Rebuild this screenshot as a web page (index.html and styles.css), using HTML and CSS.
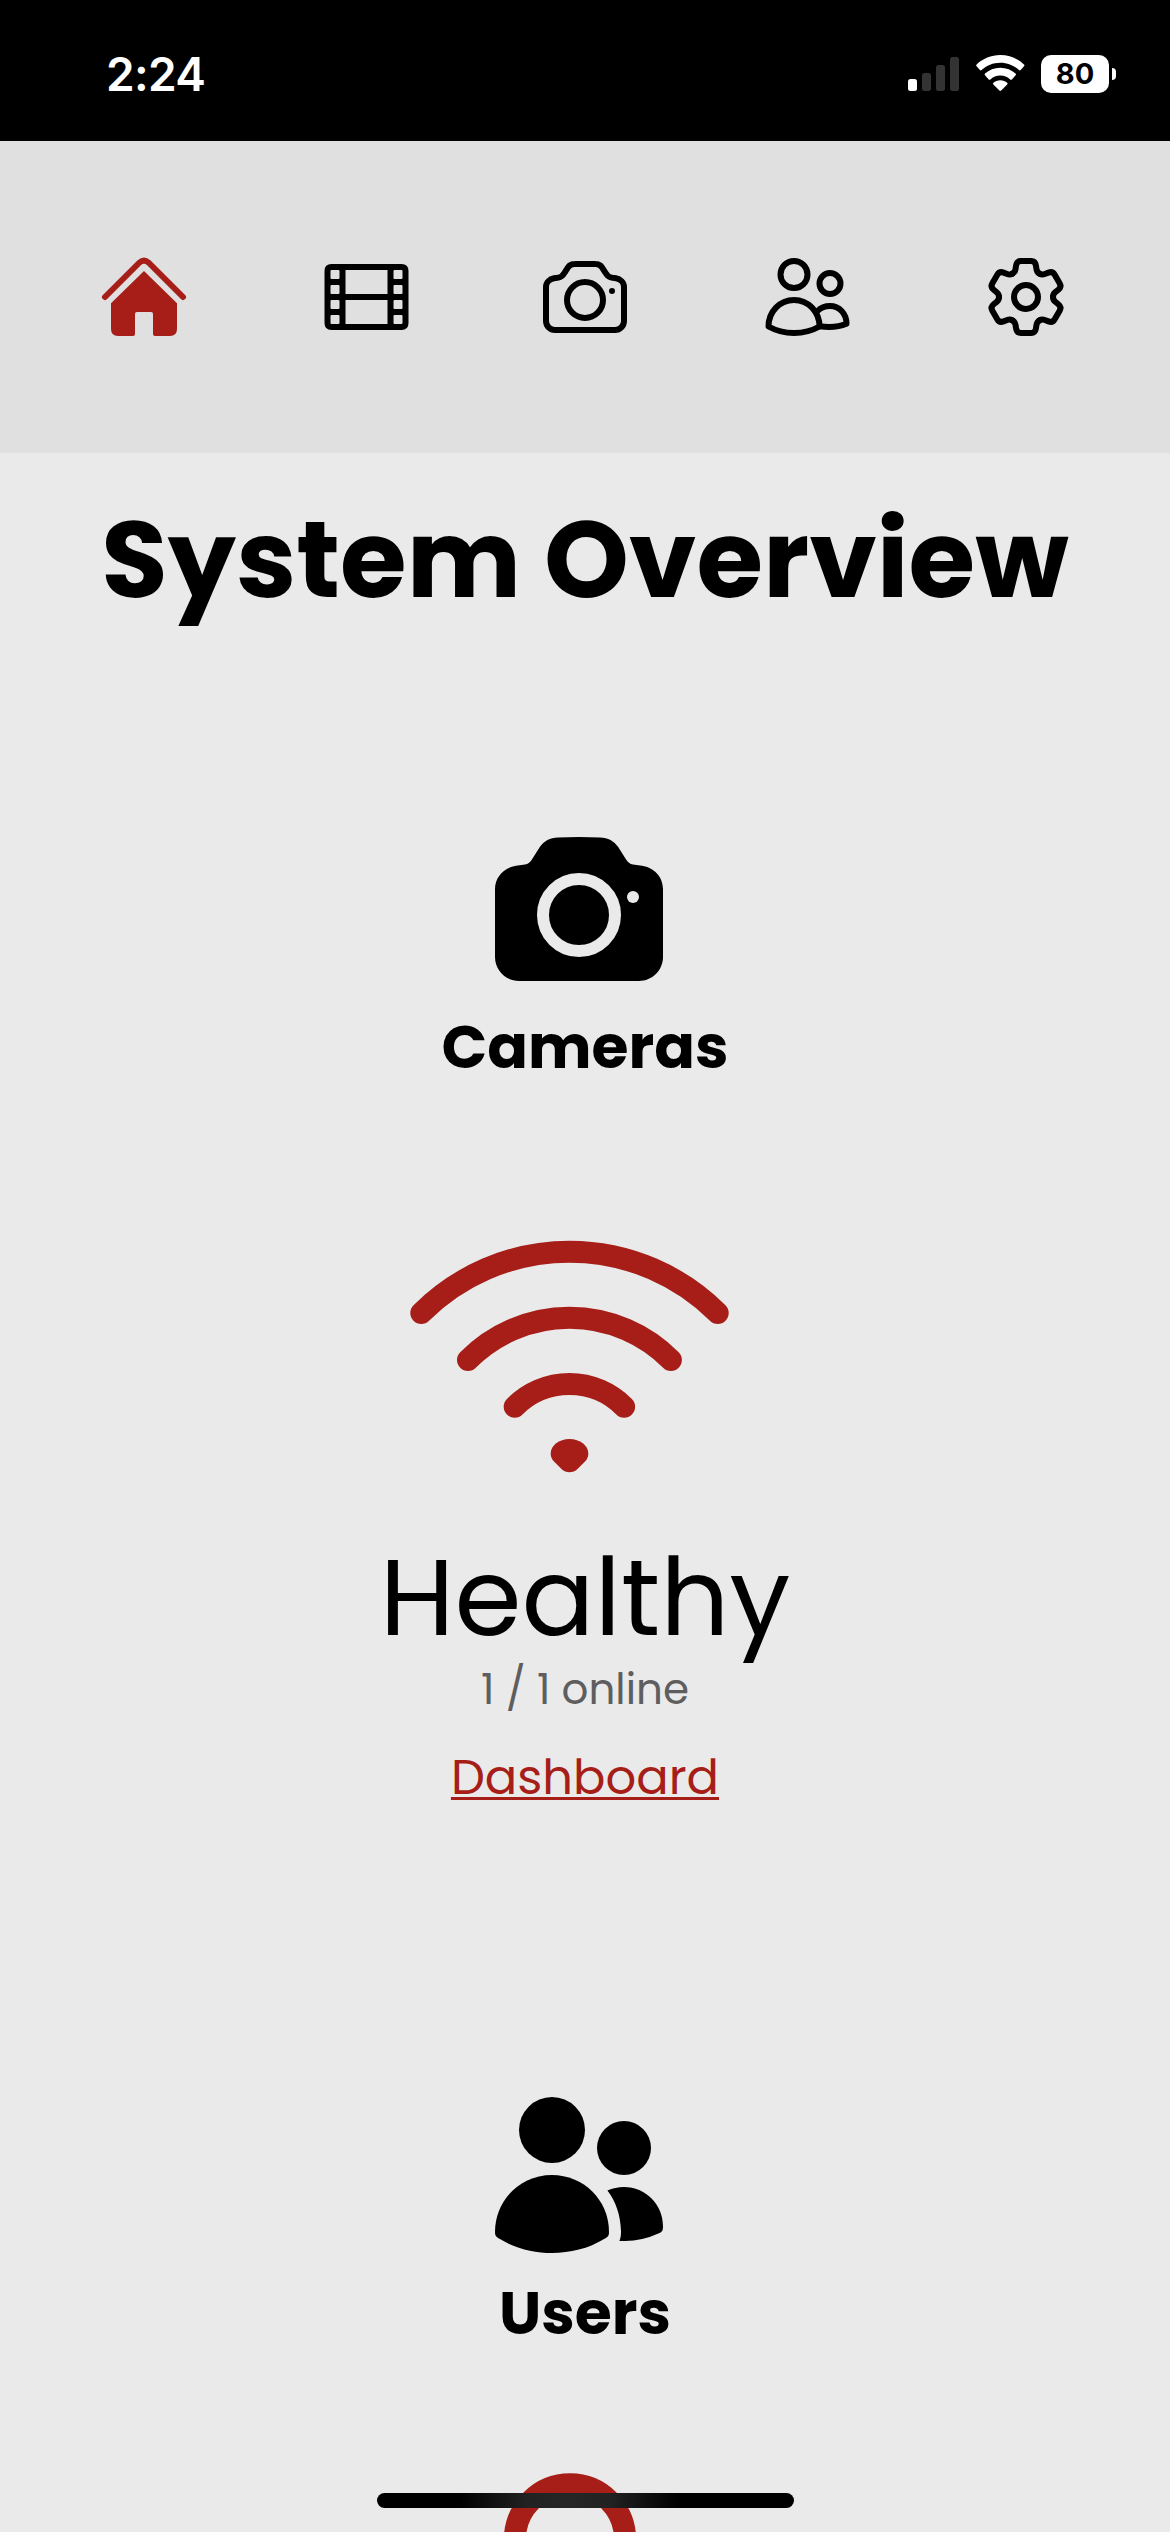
FILE: index.html
```html
<!DOCTYPE html>
<html lang="en">
<head>
<meta charset="utf-8">
<title>System Overview</title>
<link rel="stylesheet" href="styles.css">
</head>
<body>
<div class="screen">
  <header class="status">
    <span class="time">2:24</span>
    <div class="indicators">
      <svg class="signal" viewBox="0 0 51 34">
        <rect x="0" y="22" width="9" height="12" rx="2.5" fill="#fff"/>
        <rect x="14" y="16" width="9" height="18" rx="2.5" fill="#333"/>
        <rect x="28" y="8" width="9" height="26" rx="2.5" fill="#333"/>
        <rect x="42" y="0" width="9" height="34" rx="2.5" fill="#333"/>
      </svg>
      <svg class="signal-wifi" viewBox="0 0 49 36" fill="#fff">
        <path d="M24.3 0C33.500 0 41.800 3.600 48 9.400Q48.900 10.300 48 11.200L44.700 15Q43.900 15.800 43 15C38.100 10.500 31.500 7.700 24.300 7.700S10.500 10.500 5.600 15Q4.700 15.800 3.900 15L.6 11.200Q-.3 10.300 .6 9.400C6.800 3.600 15.100 0 24.300 0Z"/>
        <path d="M24.300 12.700C30.300 12.700 35.600 14.900 39.600 18.500Q40.500 19.400 39.600 20.300L35.900 24.400Q35.100 25.200 34.200 24.400C31.600 22 28.200 20.500 24.300 20.500S17 22 14.400 24.400Q13.500 25.200 12.700 24.400L9 20.300Q8.100 19.400 9 18.500C13 14.900 18.300 12.700 24.300 12.700Z"/>
        <path d="M24.300 25.200C27 25.200 29.400 26.200 31.200 27.800Q32 28.600 31.200 29.400L25.200 35.500Q24.300 36.300 23.400 35.500L17.400 29.400Q16.600 28.600 17.400 27.800C19.200 26.200 21.600 25.200 24.300 25.200Z"/>
      </svg>
      <div class="battery">
        <span class="level">80</span>
        <span class="terminal"></span>
      </div>
    </div>
  </header>

  <nav class="tabs">
    <svg class="tab active" viewBox="0 0 84 84">
      <path class="line" d="M3 42L37.500 7.500Q42 3.900 46.500 7.500L81 42"/>
      <path class="solid" d="M42 16L75 48.300V74Q75 81 68 81H53Q51 81 51 79V59Q51 57 49 57H35Q33 57 33 59V79Q33 81 31 81H16Q9 81 9 74V48.300Z"/>
    </svg>
    <svg class="tab" viewBox="-1.500 0 84 84">
      <path class="solid" fill-rule="evenodd" d="M7 9H77Q84 9 84 16V68Q84 75 77 75H7Q0 75 0 68V16Q0 9 7 9ZM7 15Q6 15 6 16V23Q6 24 7 24H14Q15 24 15 23V16Q15 15 14 15ZM7 30Q6 30 6 31V38Q6 39 7 39H14Q15 39 15 38V31Q15 30 14 30ZM7 45Q6 45 6 46V53Q6 54 7 54H14Q15 54 15 53V46Q15 45 14 45ZM7 60Q6 60 6 61V68Q6 69 7 69H14Q15 69 15 68V61Q15 60 14 60ZM70 15Q69 15 69 16V23Q69 24 70 24H77Q78 24 78 23V16Q78 15 77 15ZM70 30Q69 30 69 31V38Q69 39 70 39H77Q78 39 78 38V31Q78 30 77 30ZM70 45Q69 45 69 46V53Q69 54 70 54H77Q78 54 78 53V46Q78 45 77 45ZM70 60Q69 60 69 61V68Q69 69 70 69H77Q78 69 78 68V61Q78 60 77 60ZM21 15V39H63V15ZM21 45V69H63V45Z"/>
    </svg>
    <svg class="tab" viewBox="0 0 84 84">
      <path class="line" d="M12 75C7 75 3 71 3 66V32C3 27 7 24 11 23.300L15.500 22.600C19 22 20.200 20 21.800 17.400L25 12.400C26.500 10.200 28.500 9.100 31.500 9.100Q42 8.800 52.500 9.100C55.500 9.100 57.500 10.200 59 12.400L62.200 17.400C63.800 20 65 22 68.500 22.600L73 23.300C77 24 81 27 81 32V66C81 71 77 75 72 75Z"/>
      <circle class="line" cx="42" cy="45" r="18"/>
      <circle class="solid" cx="69" cy="36" r="3"/>
    </svg>
    <svg class="tab" viewBox="-1.500 0 84 84">
      <circle class="line" cx="28.500" cy="19.500" r="13.500"/>
      <circle class="line" cx="64.500" cy="28.500" r="10.500"/>
      <path class="line" d="M3 71.500C3 56.500 14.400 45 28.500 45S54 56.500 54 71.500Q42.500 78 28.500 78T3 71.500Z"/>
      <path class="line" d="M52 56Q57 51 64.500 51C73.600 51 81 58.400 81 68.800Q70 73.500 54 71.300"/>
    </svg>
    <svg class="tab" viewBox="-42 -42 84 84">
      <circle class="line" r="12"/>
      <path class="line" id="tooth" d="M-13.500 -23.400C-11.300 -24.600 -10.800 -26 -10.500 -27.800L-9.900 -31.600C-9.400 -34.600 -8.200 -36 -5.200 -36H5.200C8.200 -36 9.400 -34.600 9.900 -31.600L10.500 -27.800C10.800 -26 11.300 -24.600 13.500 -23.400"/>
      <use href="#tooth" transform="rotate(60)"/>
      <use href="#tooth" transform="rotate(120)"/>
      <use href="#tooth" transform="rotate(180)"/>
      <use href="#tooth" transform="rotate(240)"/>
      <use href="#tooth" transform="rotate(300)"/>
    </svg>
  </nav>

  <main class="overview">
    <h1 class="title">System Overview</h1>

    <section class="card">
      <svg class="card-icon camera" viewBox="0 6 84 72">
        <path class="solid" d="M12 78C5.400 78 0 72.600 0 66V32C0 26 4.500 21.300 10.500 20.400L15 19.800C16.600 19.500 17.300 18.900 18.300 17.500L22.400 11C24.500 8 27.500 6.200 31.500 6.200Q42 5.800 52.500 6.200C56.500 6.200 59.500 8 61.600 11L65.700 17.500C66.700 18.900 67.400 19.500 69 19.800L73.500 20.400C79.500 21.300 84 26 84 32V66C84 72.600 78.600 78 72 78Z"/>
        <circle class="cutout-ring" cx="42" cy="45" r="18"/>
        <circle class="cutout" cx="69" cy="36" r="3"/>
      </svg>
      <h2 class="name name-cameras">Cameras</h2>
      <svg class="wifi" viewBox="0 0 320 233">
        <path class="arc" d="M11.300 73A209.800 209.800 0 0 1 307.700 73M58 120A143 143 0 0 1 260.900 120M104.700 166.700A77.300 77.300 0 0 1 214.100 166.700"/>
        <path class="solid" d="M159.500 199C170 199 178.300 205.500 178.300 213.500C178.300 217 177 219.500 175 221.500L167.500 229Q164 232.300 159.500 232.300T151.500 229L144 221.500C142 219.500 140.700 217 140.700 213.500C140.700 205.500 149 199 159.500 199Z"/>
      </svg>
      <p class="state">Healthy</p>
      <p class="count">1 / 1 online</p>
      <a class="link" href="#">Dashboard</a>
    </section>

    <section class="card users">
      <svg class="card-icon people" viewBox="0 3 84 78">
        <circle class="solid" cx="28.500" cy="19.500" r="16.500"/>
        <circle class="solid" cx="64.500" cy="28.500" r="13.500"/>
        <path class="solid" d="M0 70.500C0 54.500 12.750 42 28.500 42S57 54.500 57 70.500C57 72.500 56.400 72.900 55 73.800C46.500 79 37.500 81 28.500 81S10.500 79 2 73.800C.6 72.900 0 72.500 0 70.500Z"/>
        <path class="solid" d="M56.200 49.800Q60 48 64.500 48C75.300 48 84 56.700 84 67.500C84 69.500 83.800 70.200 82.300 71Q73.500 75 65 75H62.200C62.800 73.500 63 72.500 63 70C62.700 62 60.500 55.500 56.200 49.800Z"/>
      </svg>
      <h2 class="name name-users">Users</h2>
      <svg class="person" viewBox="0 0 134 59">
        <circle class="arc" cx="67" cy="66.400" r="55.100"/>
      </svg>
    </section>
  </main>
  <div class="home-indicator"></div>
</div>
</body>
</html>
```
FILE: styles.css
```css
* { box-sizing: border-box; margin: 0; padding: 0; }

body {
  background: #eaeaea;
  color: #000;
  font-family: Poppins, Inter, "Open Sans", sans-serif;
}

.screen {
  position: relative;
  width: 1170px;
  height: 2532px;
  overflow: hidden;
}

svg { display: block; flex: none; }

.status {
  display: flex;
  justify-content: space-between;
  height: 141px;
  padding: 54px 55px 0 106px;
  background: #000;
  color: #fff;
  font-family: Inter, sans-serif;
}
.time { font-size: 46px; font-weight: 600; line-height: 41px; letter-spacing: -0.7px; }
.indicators { display: flex; align-items: flex-start; }
.signal { width: 51px; height: 34px; margin: 3px 17px 0 0; }
.signal-wifi { width: 49px; height: 36px; margin: 1px 16px 0 0; }
.battery { display: flex; align-items: center; gap: 3px; margin: 1px -1px 0 0; }
.level {
  width: 68px;
  height: 38px;
  border-radius: 10px;
  background: #fff;
  color: #000;
  font-size: 29px;
  font-weight: 700;
  line-height: 38px;
  text-align: center;
}
.terminal { width: 4px; height: 12px; border-radius: 0 4px 4px 0; background: #fff; }

.tabs {
  display: flex;
  justify-content: space-between;
  height: 312px;
  padding: 114px 102px 0;
  background: #e0e0e0;
}
.tab { width: 84px; height: 84px; overflow: visible; color: #000; }
.active { color: #a61e17; }
.line {
  fill: none;
  stroke: currentColor;
  stroke-width: 6;
  stroke-linecap: round;
  stroke-linejoin: round;
}
.solid { fill: currentColor; }

.overview, .card { display: flex; flex-direction: column; align-items: center; }
.title {
  margin-top: 42px;
  font-size: 108px;
  font-weight: 700;
  line-height: 130px;
  white-space: nowrap;
}
.card { margin-top: 212px; }
.users { margin-top: 289px; }
.card-icon { width: 168px; margin-right: 12px; }
.camera { height: 144px; }
.people { height: 156px; }
.cutout-ring { fill: none; stroke: #eaeaea; stroke-width: 6; }
.cutout { fill: #eaeaea; }
.name { font-size: 60px; font-weight: 700; line-height: 72px; }
.name-cameras { margin-top: 30px; }
.name-users { margin-top: 24px; }
.wifi { width: 320px; height: 233px; margin: 157px 30px 0 0; color: #a61e17; }
.arc { fill: none; stroke: #a61e17; stroke-width: 22; stroke-linecap: round; }
.state { margin-top: 71px; font-size: 108px; line-height: 108px; }
.count { margin-top: 8px; color: #5e5e60; font-size: 42px; line-height: 60px; }
.link {
  margin-top: 28px;
  color: #a61e17;
  font-size: 48px;
  line-height: 60px;
  text-decoration: underline 3px;
  text-underline-offset: 3px;
  text-decoration-skip-ink: none;
}
.person { width: 134px; height: 59px; margin: 124px 31px 0 0; }

.home-indicator {
  position: absolute;
  left: 377px;
  top: 2493px;
  width: 417px;
  height: 15px;
  border-radius: 8px;
  background: linear-gradient(90deg, #000 20%, #222 36%, #262626 46%, #222 56%, #000 72%);
}
```
